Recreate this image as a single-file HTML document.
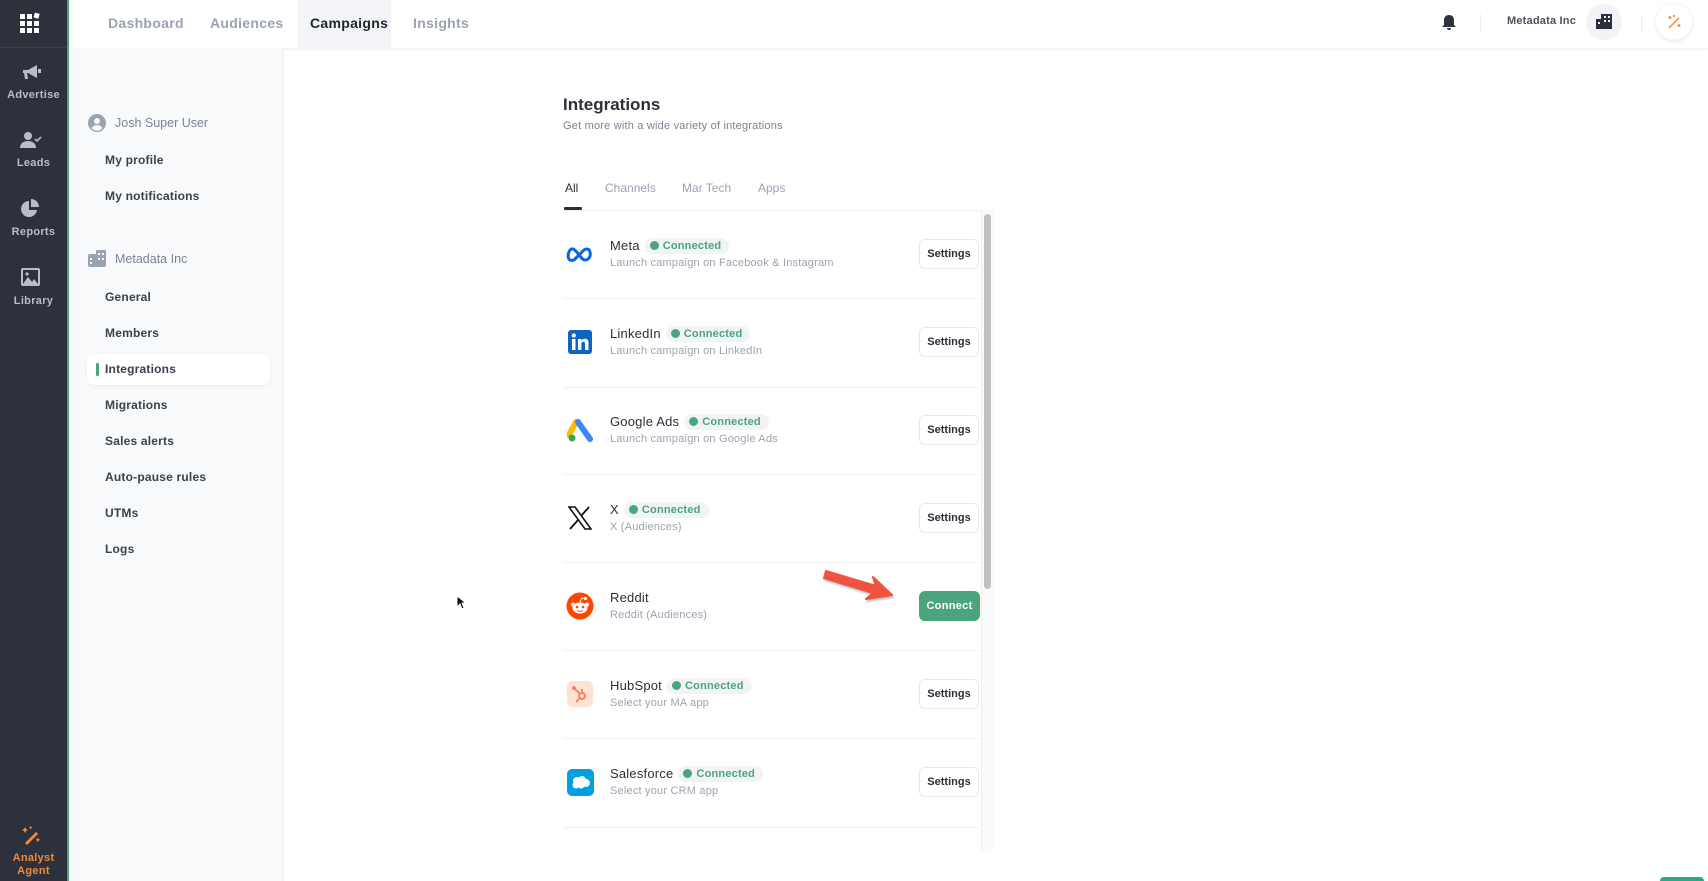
<!DOCTYPE html>
<html><head><meta charset="utf-8"><style>
*{margin:0;padding:0;box-sizing:border-box}
html,body{width:1708px;height:881px;overflow:hidden}
body{background:#fff;font-family:"Liberation Sans",sans-serif;color:#2a2f3a}
#w{position:relative;width:1708px;height:881px;overflow:hidden}
.a{position:absolute}
.side{left:0;top:0;width:67px;height:881px;background:#2c313b}
.gline{left:67px;top:0;width:2px;height:881px;background:#4aa57a}
.sl{color:#b8bec8;font-size:11px;font-weight:bold;width:67px;text-align:center;letter-spacing:.3px}
.hdr{left:69px;top:0;right:0;height:48px;background:#fff;box-shadow:0 1px 3px rgba(0,0,0,.08)}
.tab{top:0;height:48px;line-height:46px;font-size:14px;font-weight:bold;color:#9aa3b2;letter-spacing:.3px}
.sub{left:69px;top:48px;width:215px;height:833px;background:#f8f9fb;border-right:1px solid #eceef2}
.mi{left:105px;font-size:12px;font-weight:bold;color:#3a404c;letter-spacing:.2px}
.sep{left:563px;width:416px;height:1px;background:#eef0f3}
.nm{font-size:13px;color:#2a2f3a;letter-spacing:.2px}
.ds{font-size:11px;color:#9aa3b2;letter-spacing:.2px}
.badge{display:inline-block;background:#f1f3f6;border-radius:9px;padding:2px 8px 2px 5px;font-size:11px;font-weight:bold;color:#4aa57a;margin-left:5px;vertical-align:1px}
.badge i{display:inline-block;width:9px;height:9px;border-radius:50%;background:#4aa57a;margin-right:4px;vertical-align:-1px}
.btn{left:919px;width:60px;height:30px;border:1px solid #e6e8ec;border-radius:6px;font-size:11px;font-weight:bold;color:#2a2f3a;text-align:center;line-height:28px;background:#fff}
</style></head><body><div id="w">
<div class="a side"></div><div class="a gline"></div>
<div class="a" style="left:0;top:47px;width:67px;height:1px;background:#3b414c"></div>
<svg class="a" style="left:19px;top:12px" width="22" height="22" viewBox="0 0 22 22" fill="#fff"><rect x="1" y="2" width="5" height="5"/><rect x="8" y="2" width="5" height="5"/><rect x="15" y="1" width="5" height="5" transform="rotate(15 17 4)"/><rect x="1" y="9" width="5" height="5"/><rect x="8" y="9" width="5" height="5"/><rect x="15" y="9" width="5" height="5"/><rect x="1" y="16" width="5" height="5"/><rect x="8" y="16" width="5" height="5"/><rect x="15" y="16" width="5" height="5"/></svg>
<svg class="a" style="left:22px;top:63px" width="20" height="19" viewBox="0 0 20 19" fill="#b8bec8"><path d="M1 7h5l9-5v13l-9-5H5l1 6H3L2 10H1z"/><rect x="16" y="6" width="3" height="4"/></svg>
<div class="a sl" style="top:89px">Advertise</div>
<svg class="a" style="left:20px;top:131px" width="22" height="18" viewBox="0 0 22 18" fill="#b8bec8"><circle cx="8" cy="5" r="4"/><path d="M0 17c0-5 4-7 8-7s8 2 8 7z"/><path d="M15 8l2 2 4-4" stroke="#b8bec8" stroke-width="1.6" fill="none"/></svg>
<div class="a sl" style="top:157px">Leads</div>
<svg class="a" style="left:21px;top:199px" width="19" height="19" viewBox="0 0 19 19" fill="#b8bec8"><path d="M8 2a8 8 0 1 0 8 9H8z"/><path d="M10 0a8 8 0 0 1 8 8h-8z"/></svg>
<div class="a sl" style="top:226px">Reports</div>
<svg class="a" style="left:21px;top:268px" width="19" height="18" viewBox="0 0 19 18"><rect x="0" y="0" width="19" height="18" rx="2" fill="#b8bec8"/><rect x="2" y="2" width="15" height="14" fill="#2c313b"/><path d="M2 16l5-7 4 5 2-3 4 5z" fill="#b8bec8"/><circle cx="6" cy="6" r="1.6" fill="#b8bec8"/></svg>
<div class="a sl" style="top:295px">Library</div>
<svg class="a" style="left:21px;top:826px" width="20" height="19" viewBox="0 0 20 19" fill="#f08a3c"><path d="M4 17L15 6l2 2L6 19z"/><path d="M3 3l1-2 1 2 2 1-2 1-1 2-1-2-2-1z"/><path d="M9 1l.7-1 .7 1 1 .6-1 .6-.7 1-.7-1-1-.6z"/><path d="M16 13l.8-1.5.8 1.5 1.5.8-1.5.8-.8 1.5-.8-1.5-1.5-.8z"/></svg>
<div class="a sl" style="top:852px;color:#f08a3c;line-height:13px">Analyst<br>Agent</div>

<div class="a hdr"></div>
<div class="a" style="left:298px;top:0;width:93px;height:48px;background:#f3f4f7"></div>
<div class="a tab" style="left:108px">Dashboard</div>
<div class="a tab" style="left:210px">Audiences</div>
<div class="a tab" style="left:310px;color:#1f2430">Campaigns</div>
<div class="a tab" style="left:413px">Insights</div>
<svg class="a" style="left:1442px;top:14px" width="14" height="17" viewBox="0 0 14 17" fill="#2f343e"><path d="M7 1c3 0 5 2 5 5v5l2 2H0l2-2V6c0-3 2-5 5-5z"/><path d="M5 14h4a2 2 0 0 1-4 0z"/></svg>
<div class="a" style="left:1480px;top:14px;width:1px;height:18px;background:#eceef2"></div>
<div class="a" style="left:1507px;top:15px;font-size:11px;font-weight:bold;color:#4a505c;letter-spacing:.2px">Metadata Inc</div>
<div class="a" style="left:1586px;top:4px;width:36px;height:36px;border-radius:50%;background:#f1f3f6"></div>
<svg class="a" style="left:1596px;top:14px" width="16" height="15" viewBox="0 0 16 15" fill="#2a2f3a"><path d="M5 0h11v15H5z"/><path d="M0 5h6v10H0z"/><g fill="#f1f3f6"><rect x="8" y="2" width="2" height="2"/><rect x="12" y="2" width="2" height="2"/><rect x="8" y="6" width="2" height="2"/><rect x="12" y="6" width="2" height="2"/><rect x="2" y="8" width="2" height="2"/></g></svg>
<div class="a" style="left:1641px;top:14px;width:1px;height:18px;background:#eceef2"></div>
<div class="a" style="left:1656px;top:4px;width:36px;height:36px;border-radius:50%;background:#fff;box-shadow:0 1px 4px rgba(0,0,0,.12)"></div>
<svg class="a" style="left:1666px;top:14px" width="16" height="16" viewBox="0 0 16 16" fill="none" stroke="#f08a3c" stroke-width="1.4"><path d="M3 14L13 4"/><path d="M4 2v3M2.5 3.5h3M13 10v3M11.5 11.5h3M8 1v2M7 2h2"/></svg>

<div class="a sub"></div>
<svg class="a" style="left:88px;top:114px" width="18" height="18" viewBox="0 0 18 18"><circle cx="9" cy="9" r="9" fill="#9aa3b2"/><circle cx="9" cy="7" r="3" fill="#f8f9fb"/><path d="M3.5 14c1.5-2 3.5-3 5.5-3s4 1 5.5 3a7 7 0 0 1-11 0z" fill="#f8f9fb"/></svg>
<div class="a" style="left:115px;top:116px;font-size:12.5px;color:#7b8494">Josh Super User</div>
<div class="a mi" style="top:153px">My profile</div>
<div class="a mi" style="top:189px">My notifications</div>
<svg class="a" style="left:88px;top:250px" width="18" height="17" viewBox="0 0 18 17" fill="#9aa3b2"><rect x="0" y="4" width="18" height="13" rx="2"/><rect x="8" y="0" width="10" height="6" rx="1"/><g fill="#f8f9fb"><rect x="2" y="8" width="2" height="2"/><rect x="2" y="12" width="2" height="2"/><rect x="10" y="3" width="2" height="2"/><rect x="14" y="3" width="2" height="2"/><rect x="10" y="8" width="2" height="2"/><rect x="14" y="8" width="2" height="2"/></g></svg>
<div class="a" style="left:115px;top:252px;font-size:12.5px;color:#7b8494">Metadata Inc</div>
<div class="a mi" style="top:290px">General</div>
<div class="a mi" style="top:326px">Members</div>
<div class="a" style="left:87px;top:354px;width:183px;height:31px;background:#fff;border-radius:7px;box-shadow:0 1px 3px rgba(0,0,0,.06)"></div>
<div class="a" style="left:96px;top:363px;width:3px;height:13px;background:#4aa57a;border-radius:1px"></div>
<div class="a mi" style="top:362px">Integrations</div>
<div class="a mi" style="top:398px">Migrations</div>
<div class="a mi" style="top:434px">Sales alerts</div>
<div class="a mi" style="top:470px">Auto-pause rules</div>
<div class="a mi" style="top:506px">UTMs</div>
<div class="a mi" style="top:542px">Logs</div>

<div class="a" style="left:563px;top:95px;font-size:17px;font-weight:bold;color:#2a2f3a">Integrations</div>
<div class="a" style="left:563px;top:120px;font-size:11px;color:#7b8494;letter-spacing:.2px">Get more with a wide variety of integrations</div>
<div class="a" style="left:565px;top:181px;font-size:12px;color:#2a2f3a">All</div>
<div class="a" style="left:605px;top:181px;font-size:12px;color:#9aa3b2">Channels</div>
<div class="a" style="left:682px;top:181px;font-size:12px;color:#9aa3b2">Mar Tech</div>
<div class="a" style="left:758px;top:181px;font-size:12px;color:#9aa3b2">Apps</div>
<div class="a" style="left:564px;top:207px;width:18px;height:3px;background:#2a2f3a;border-radius:1px"></div>
<div class="a" style="left:563px;top:210px;width:430px;height:1px;background:#eef0f3"></div>
<div class="a" style="left:981px;top:210px;width:13px;height:641px;background:#fafafa;border-left:1px solid #eee"></div>
<div class="a" style="left:984px;top:214px;width:7px;height:375px;background:#c1c1c1;border-radius:4px"></div>

<div class="a sep" style="top:298px"></div><div class="a sep" style="top:387px"></div><div class="a sep" style="top:474px"></div><div class="a sep" style="top:562px"></div><div class="a sep" style="top:650px"></div><div class="a sep" style="top:738px"></div><div class="a sep" style="top:827px"></div>

<svg class="a" style="left:566px;top:246px" width="28" height="16" viewBox="0 0 28 16" fill="none" stroke="#0a66e0" stroke-width="3"><path d="M3 13c-2-3 0-11 4-10 4 1 8 11 12 11 4 0 6-4 5-8-1-4-5-4-8 0L10 12c-2 3-6 3-7 1z"/></svg>
<div class="a nm" style="left:610px;top:238px">Meta<span class="badge"><i></i>Connected</span></div>
<div class="a ds" style="left:610px;top:257px">Launch campaign on Facebook &amp; Instagram</div>
<div class="a btn" style="top:239px">Settings</div>
<svg class="a" style="left:568px;top:330px" width="24" height="24" viewBox="0 0 24 24"><rect width="24" height="24" rx="3" fill="#0a66c2"/><rect x="4" y="9" width="3.5" height="11" fill="#fff"/><circle cx="5.8" cy="5.5" r="2.1" fill="#fff"/><path d="M10 9h3.3v1.6c.6-1.1 2-1.9 3.6-1.9 3 0 3.6 2 3.6 4.6V20H17v-5.8c0-1.4-.3-2.5-1.7-2.5s-1.9 1-1.9 2.5V20H10z" fill="#fff"/></svg>
<div class="a nm" style="left:610px;top:326px">LinkedIn<span class="badge"><i></i>Connected</span></div>
<div class="a ds" style="left:610px;top:345px">Launch campaign on LinkedIn</div>
<div class="a btn" style="top:327px">Settings</div>
<svg class="a" style="left:567px;top:419px" width="26" height="24" viewBox="0 0 26 24"><path d="M9 3L2 16" stroke="#fbbc04" stroke-width="6" stroke-linecap="round"/><path d="M11 3l12 17" stroke="#4285f4" stroke-width="6" stroke-linecap="round"/><circle cx="5" cy="19" r="3.5" fill="#34a853"/></svg>
<div class="a nm" style="left:610px;top:414px">Google Ads<span class="badge"><i></i>Connected</span></div>
<div class="a ds" style="left:610px;top:433px">Launch campaign on Google Ads</div>
<div class="a btn" style="top:415px">Settings</div>
<svg class="a" style="left:568px;top:506px" width="24" height="24" viewBox="0 0 24 24"><path d="M1 1h6l16 22h-6z" fill="none" stroke="#111" stroke-width="1.6"/><path d="M21 1L13.5 9.5M2 23l8.5-9.5" stroke="#111" stroke-width="1.8"/></svg>
<div class="a nm" style="left:610px;top:502px">X<span class="badge"><i></i>Connected</span></div>
<div class="a ds" style="left:610px;top:521px">X (Audiences)</div>
<div class="a btn" style="top:503px">Settings</div>
<svg class="a" style="left:566px;top:592px" width="28" height="28" viewBox="0 0 28 28"><circle cx="14" cy="14" r="13.5" fill="#ff4500"/><ellipse cx="14" cy="16" rx="7.5" ry="5.5" fill="#fff"/><circle cx="7" cy="12.5" r="2" fill="#fff"/><circle cx="21" cy="12.5" r="2" fill="#fff"/><circle cx="19.5" cy="6.5" r="1.6" fill="#fff"/><path d="M14 10.5l1.5-4.5 4 .8" stroke="#fff" stroke-width="1" fill="none"/><circle cx="11" cy="15" r="1.3" fill="#ff4500"/><circle cx="17" cy="15" r="1.3" fill="#ff4500"/><path d="M11 18.5c2 1.2 4 1.2 6 0" stroke="#ff4500" stroke-width="1" fill="none"/></svg>
<div class="a nm" style="left:610px;top:590px">Reddit</div>
<div class="a ds" style="left:610px;top:609px">Reddit (Audiences)</div>
<div class="a" style="left:919px;top:591px;width:61px;height:30px;background:#4aa57a;border-radius:6px;color:#fff;font-size:11px;font-weight:bold;text-align:center;line-height:30px;letter-spacing:.3px">Connect</div>
<svg class="a" style="left:820px;top:566px" width="80" height="38" viewBox="0 0 80 38"><path d="M6 5L56 20l-3 -9 L72 29 L46 33 L53 27 L4 12z" fill="#f0533f" stroke="#f0533f" stroke-width="2" stroke-linejoin="round" style="filter:drop-shadow(1px 2px 1px rgba(0,0,0,.25))"/></svg>
<div class="a" style="left:567px;top:681px;width:26px;height:26px;background:#fde3d6;border-radius:5px"></div>
<svg class="a" style="left:572px;top:685px" width="16" height="18" viewBox="0 0 16 18" fill="none" stroke="#ff7a59" stroke-width="1.8"><circle cx="10" cy="11" r="3"/><path d="M10 8V4M8 9L2 3M8 13l-4 4"/><circle cx="2" cy="3" r="1" fill="#ff7a59"/></svg>
<div class="a nm" style="left:610px;top:678px">HubSpot<span class="badge"><i></i>Connected</span></div>
<div class="a ds" style="left:610px;top:697px">Select your MA app</div>
<div class="a btn" style="top:679px">Settings</div>
<div class="a" style="left:567px;top:769px;width:27px;height:27px;background:#00a1e0;border-radius:5px"></div>
<svg class="a" style="left:571px;top:776px" width="19" height="13" viewBox="0 0 19 13" fill="#fff"><circle cx="6" cy="5" r="4"/><circle cx="11" cy="4" r="4"/><circle cx="15" cy="7" r="4"/><circle cx="5" cy="9" r="3.5"/><circle cx="10" cy="9" r="3.5"/></svg>
<div class="a nm" style="left:610px;top:766px">Salesforce<span class="badge"><i></i>Connected</span></div>
<div class="a ds" style="left:610px;top:785px">Select your CRM app</div>
<div class="a btn" style="top:767px">Settings</div>

<svg class="a" style="left:456px;top:595px" width="10" height="15" viewBox="0 0 10 15"><path d="M1 1v11l3-3 2 5 2-1-2-5h4z" fill="#111" stroke="#fff" stroke-width="1"/></svg>
<div class="a" style="left:1660px;top:877px;width:44px;height:4px;border-radius:22px 22px 0 0;background:#2aa98a"></div>
</div></body></html>
